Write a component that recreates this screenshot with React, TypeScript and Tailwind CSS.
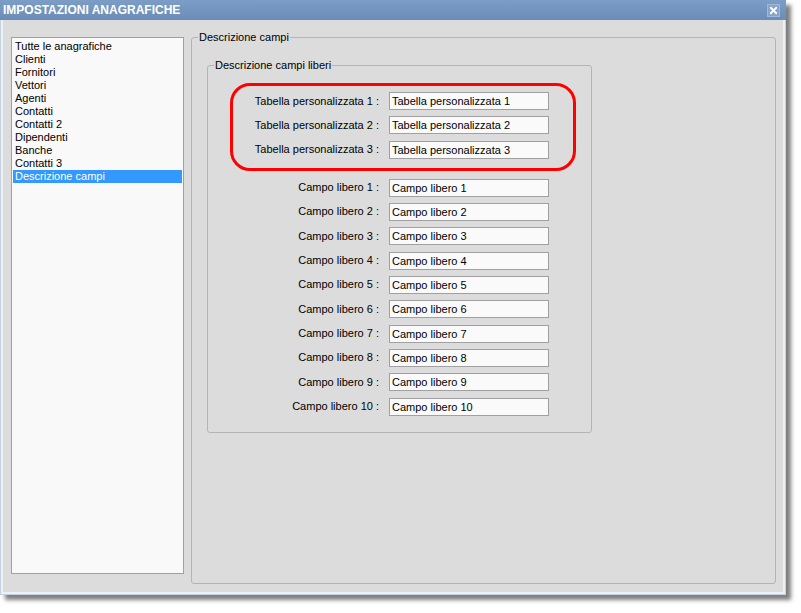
import { X } from 'lucide-react';

const listItems = [
  'Tutte le anagrafiche',
  'Clienti',
  'Fornitori',
  'Vettori',
  'Agenti',
  'Contatti',
  'Contatti 2',
  'Dipendenti',
  'Banche',
  'Contatti 3',
  'Descrizione campi',
];

const tabelle = ['Tabella personalizzata 1', 'Tabella personalizzata 2', 'Tabella personalizzata 3'];
const campi = Array.from({ length: 10 }, (_, i) => `Campo libero ${i + 1}`);

function FieldRow({ label, value }: { label: string; value: string }) {
  return (
    <div className="flex h-[18px] items-center">
      <span className="w-[172px] pr-[1px] text-right whitespace-nowrap">{label} :</span>
      <div className="ml-[9px] flex h-[18px] w-[160px] items-center border border-[#a0a0a0] bg-[#fafafa] pl-[2px] pt-[1px] whitespace-nowrap text-black">
        {value}
      </div>
    </div>
  );
}

export default function App() {
  return (
    <div className="min-h-screen bg-white text-[11px] leading-[13px] text-black" style={{ fontFamily: '"Liberation Sans", Arial, sans-serif' }}>
      <div className="flex h-[595px] w-[786px] flex-col border border-t-0 border-[#c4d2e0] bg-[#eef1f4] shadow-[5px_5px_4px_rgba(0,0,0,0.5)]">
        {/* Title bar */}
        <div className="-mx-[1px] flex h-[20px] shrink-0 items-center justify-between bg-gradient-to-b from-[#7b9dc6] to-[#6a8cb7] pl-[3px] pr-[6px]">
          <span className="text-[12px] font-bold text-white">IMPOSTAZIONI ANAGRAFICHE</span>
          <div className="flex h-[13px] w-[13px] items-center justify-center border border-[#9fb8d8] bg-[#86a4cc]">
            <X className="h-[11px] w-[11px] text-white" strokeWidth={4} />
          </div>
        </div>

        {/* Body */}
        <div className="mx-[2px] mb-[2px] flex flex-1 items-start bg-[#dcdcdc] pl-[8px]">
          {/* List */}
          <div className="mt-[17px] h-[537px] w-[173px] shrink-0 border border-[#a0a0a0] bg-[#f9f9f9] px-[1px] pt-[2px]">
            {listItems.map((item, i) => {
              const selected = i === listItems.length - 1;
              return (
                <div
                  key={item}
                  className={
                    selected
                      ? 'h-[13px] border border-dotted border-[#c87533] bg-[#3399ff] pl-[1px] leading-[11px] text-white'
                      : 'h-[13px] pl-[2px] whitespace-nowrap'
                  }
                >
                  {item}
                </div>
              );
            })}
          </div>

          {/* Group box */}
          <fieldset className="ml-[7px] mt-[10px] h-[554px] w-[585px] rounded-[3px] border border-[#b4b4b4]">
            <legend className="ml-[6px] px-[1px] leading-[14px]">Descrizione campi</legend>

            <fieldset className="ml-[15px] mt-[14px] h-[375px] w-[385px] rounded-[3px] border border-[#b4b4b4]">
              <legend className="ml-[6px] px-[1px] leading-[14px]">Descrizione campi liberi</legend>

              <div className="relative mt-[20px] flex flex-col gap-[6.3px]">
                {tabelle.map((t) => (
                  <FieldRow key={t} label={t} value={t} />
                ))}
                <div className="pointer-events-none absolute left-[22px] top-[-9px] h-[88px] w-[346px] rounded-[20px] border-[3.5px] border-[#ff0000]" />
              </div>

              <div className="mt-[20px] flex flex-col gap-[6.33px]">
                {campi.map((c) => (
                  <FieldRow key={c} label={c} value={c} />
                ))}
              </div>
            </fieldset>
          </fieldset>
        </div>
      </div>
    </div>
  );
}
